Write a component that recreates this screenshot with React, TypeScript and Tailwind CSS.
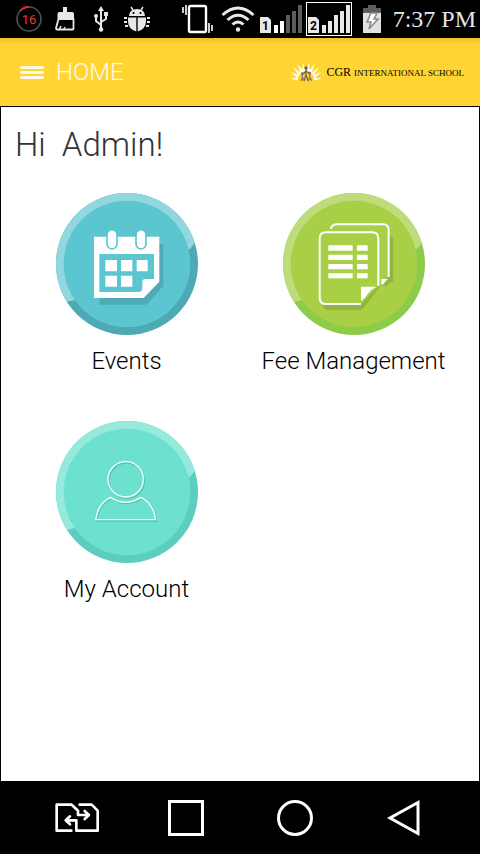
import React from 'react';

interface TileArtProps {
  base: string;
  light: string;
  dark: string;
  children: React.ReactNode;
}

// Round badge with a two-tone bevel, the glyph goes in the middle
const TileArt: React.FC<TileArtProps> = ({ base, light, dark, children }) => (
  <svg viewBox="0 0 426 426" className="size-[142px]" aria-hidden="true">
    <circle cx="213" cy="213" r="213" fill={dark} />
    <path d="M416.1 149 A213 213 0 1 0 32.4 325.9 L54 322 L402 168 Z" fill={light} />
    <circle cx="213" cy="213" r="190" fill={base} />
    {children}
  </svg>
);

const EventsArt = () => (
  <TileArt base="#5bc5d0" light="#92d7e0" dark="#4da9b4">
    <g transform="translate(-30 -24)">
      <path d="M160 330 V359 H297 Q303 359 308 353 L348 307 Q352 303 352 297 V178 H330 Z" fill="#4fabb6" />
      <path d="M144 155 H340 V290 L293 339 H144 Z" fill="#fff" />
      <path d="M160 207 H324 V282 H298 Q289 282 289 291 V309 Q289 321 277 321 H160 Z" fill="#5bc5d0" />
      <path d="M178 225h35v34h-35z M225 225h34v34h-34z M272 225h33v34h-33z M178 272h35v33h-35z M225 272h34v33h-34z" fill="#fff" />
      <rect x="183" y="134" width="30" height="58" rx="15" fill="#fff" stroke="#5bc5d0" strokeWidth="5" />
      <rect x="270" y="134" width="30" height="58" rx="15" fill="#fff" stroke="#5bc5d0" strokeWidth="5" />
    </g>
  </TileArt>
);

const FeeArt = () => (
  <TileArt base="#a9cf46" light="#bfdc7b" dark="#8dcb4b">
    <g transform="translate(-69 -26)">
      <path d="M386 150 L400 160 V290 L378 304 L362 304 L311 370 Q304 378 294 378 H204 Q190 376 186 358 H303 L358 303 L386 275 Z" fill="#90b63e" />
      <path d="M179 163 Q179 144 198 144 H336 Q355 144 355 163 V303 L303 359 H197 Q179 359 179 341 Z" fill="#a9cf46" />
      <g fill="none" stroke="#fff" strokeWidth="6">
        <path d="M212 133 Q217 120 231 120 H369 Q386 120 386 137 V278" />
        <path d="M303 359 H198 Q179 359 179 340 V163 Q179 144 198 144 H336 Q355 144 355 163 V305" />
      </g>
      <path d="M303 307 H349 Q333 315 326 325 Q316 341 303 351 Z" fill="#fff" />
      <path d="M364 284 H384 Q376 290 373 296 Q368 302 364 303 Z" fill="#fff" />
      <path
        d="M205 183h73v16h-73z M205 211h73v16h-73z M205 239h73v16h-73z M205 267h73v15h-73z M291 183h32v16h-32z M291 211h32v16h-32z M291 239h32v16h-32z M291 267h32v15h-32z"
        fill="#fff"
      />
    </g>
  </TileArt>
);

const AccountArt = () => (
  <TileArt base="#6ce1cf" light="#95eadd" dark="#5dcdc0">
    <g transform="translate(-30 -33)" fill="none" strokeWidth="4">
      <g stroke="#58c4b4" transform="translate(3 4)">
        <circle cx="239" cy="208" r="53" />
        <path d="M149 329 Q156 280 193 262 Q239 292 284 262 Q322 280 329 329 Z" />
      </g>
      <g stroke="#effffc">
        <circle cx="239" cy="208" r="53" />
        <path d="M149 329 Q156 280 193 262 Q239 292 284 262 Q322 280 329 329 Z" />
      </g>
    </g>
  </TileArt>
);

const SchoolMark = () => (
  <svg viewBox="0 0 96 60" className="w-8 h-5" aria-hidden="true">
    <g fill="#fffdf0">
      <path d="M1 50 L24 46 L24 55 Z M1 30 L26 39 L23 48 Z M9 14 L32 34 L26 42 Z M22 5 L40 28 L32 35 Z M39 0 L46 27 L37 30 Z" />
      <path d="M95 50 L72 46 L72 55 Z M95 30 L70 39 L73 48 Z M87 14 L64 34 L70 42 Z M74 5 L56 28 L64 35 Z M57 0 L50 27 L59 30 Z" />
    </g>
    <circle cx="48" cy="18" r="5" fill="#6b6257" />
    <g stroke="#75695f" strokeWidth="4" fill="none">
      <path d="M48 21 V40 M48 27 L40 36 M48 27 L57 34 M48 38 L42 57 M48 38 L54 57" />
      <path d="M37 38 V47 L33 57 M37 47 L42 56" stroke="#8a6d78" />
      <path d="M59 36 V46 L55 57 M59 46 L65 56" stroke="#8d7a52" />
    </g>
    <circle cx="37" cy="35" r="4" fill="#6b6a86" />
    <circle cx="59" cy="33" r="4" fill="#96614c" />
  </svg>
);

const StatusBar = () => (
  <div className="flex h-[38px] items-center bg-black pl-[11px] pr-1">
    <div className="flex items-center">
      <span className="flex w-9 justify-center">
        <svg viewBox="0 0 26 26" className="size-[26px]">
          <circle cx="13" cy="13" r="12" fill="none" stroke="#4b5356" strokeWidth="1.6" />
          <path d="M4 5 A12 12 0 0 1 13 1" fill="none" stroke="#e02840" strokeWidth="1.8" />
          <text x="13" y="17.5" textAnchor="middle" fontSize="13" fill="#e83434" className="font-['Roboto',sans-serif]">16</text>
        </svg>
      </span>
      <span className="flex w-9 justify-center">
        <svg viewBox="0 0 20 24" className="w-5 h-6">
          <path d="M8 0h4v5h5q2 0 2 2v4.500H2.500V7q0-2 2-2H8z" fill="#e8e8e8" />
          <path d="M3.500 12h15v9.500q0 1-1 1H2q-1 0-1-1.500z" fill="#000" stroke="#e8e8e8" strokeWidth="1.800" strokeLinejoin="round" />
          <path d="M4.500 22l1.500-3 M9 22l1-2" stroke="#e8e8e8" strokeWidth="1.500" />
        </svg>
      </span>
      <span className="flex w-9 justify-center">
        <svg viewBox="0 0 14 26" className="w-3.5 h-[26px]">
          <path d="M7 3v21 M7 19l-5-4v-5 M7 16l5-3V8" fill="none" stroke="#e8e8e8" strokeWidth="2" />
          <path d="M7 0l3 5H4z M10 6h4v4h-4z" fill="#e8e8e8" />
          <circle cx="2" cy="10" r="2" fill="#e8e8e8" />
          <circle cx="7" cy="23.500" r="2.300" fill="#e8e8e8" />
        </svg>
      </span>
      <span className="flex w-9 justify-center">
        <svg viewBox="0 0 26 26" className="size-[26px]">
          <path d="M7 1l2 3 M19 1l-2 3" stroke="#e8e8e8" strokeWidth="1.500" />
          <path d="M5 10 Q5.500 3 13 3 Q20.500 3 21 10z M4 11.500h8.300V25.500Q4 23 4 15z M13.700 11.500H22V15q0 8-8.300 10.500z" fill="#e8e8e8" />
          <circle cx="9.500" cy="7" r="1.100" fill="#000" />
          <circle cx="16.500" cy="7" r="1.100" fill="#000" />
          <path d="M0 12h3 M0 16h3 M1 20h3 M23 12h3 M23 16h3 M22 20h3" stroke="#e8e8e8" strokeWidth="2" />
        </svg>
      </span>
    </div>

    <div className="ml-auto flex items-center">
      <svg viewBox="0 0 32 30" className="mr-2 w-8 h-[30px]">
        <rect x="8" y="2" width="17" height="26" rx="1.500" fill="none" stroke="#fff" strokeWidth="2.400" />
        <path d="M2 3v6 M5 1v10 M28 19v10 M31 21v6" stroke="#fff" strokeWidth="1.600" />
      </svg>
      <svg viewBox="0 0 34 26" className="mr-1 w-[34px] h-[26px]">
        <g fill="none" stroke="#e8e8e8" strokeWidth="3">
          <path d="M1.500 9 Q17 -5 32.500 9" />
          <path d="M6.500 14 Q17 4.500 27.500 14" />
          <path d="M11.500 18.500 Q17 13.500 22.500 18.500" />
        </g>
        <circle cx="17" cy="23.500" r="2.200" fill="#e8e8e8" />
      </svg>
      <svg viewBox="0 0 44 34" className="mr-0.5 w-11 h-[34px]">
        <path d="M1 15h8l3 3v13H1z" fill="#e8e8e8" />
        <text x="6.500" y="28" textAnchor="middle" fontSize="12" fontWeight="700" fill="#000" className="font-['Roboto',sans-serif]">1</text>
        <path d="M15 23h4v8h-4z M21 19h4v12h-4z" fill="#fff" />
        <path d="M27 13h4v18h-4z M33 9h4v22h-4z M39 3h4v28h-4z" fill="#5c5c5c" />
      </svg>
      <svg viewBox="0 0 48 36" className="mr-2.5 w-12 h-9">
        <rect x="1.500" y="1.500" width="45" height="33" fill="none" stroke="#fff" />
        <path d="M3 16h8l3 3v13H3z" fill="#e8e8e8" />
        <text x="8.500" y="29" textAnchor="middle" fontSize="12" fontWeight="700" fill="#000" className="font-['Roboto',sans-serif]">2</text>
        <path d="M17 24h4v8h-4z M23 20h4v12h-4z M29 14h4v18h-4z M35 10h4v22h-4z M41 4h4v28h-4z" fill="#e8e8e8" />
      </svg>
      <svg viewBox="0 0 18 30" className="mr-3 w-[18px] h-[30px]">
        <path d="M5 1h8v3h5v8H0V4h5z" fill="#5c5c5c" />
        <path d="M0 9h18v20H0z" fill="#e2e2e2" />
        <path d="M8 9h6l-3 6h4L6 25l2-7H4z" fill="#fff" stroke="#8c8c8c" strokeWidth="1.600" />
      </svg>
      <span className="font-['Liberation_Serif',serif] text-2xl text-gray-200">7:37 PM</span>
    </div>
  </div>
);

const tiles = [
  { name: 'Events', art: <EventsArt /> },
  { name: 'Fee Management', art: <FeeArt /> },
  { name: 'My Account', art: <AccountArt /> },
];

const navButtons = [
  {
    name: 'Switch SIM',
    icon: (
      <svg viewBox="163 101 132 87" className="w-11 h-[29px]" fill="none" stroke="#fff" strokeWidth="8" strokeLinejoin="round" strokeLinecap="round">
        <path d="M212 184 H168 V106 H213 L232 124 V137 H262 M252 125 L265 137 L252 149" />
        <path d="M237 106 H273 L291 124 V184 H227 V153 H197 M208 141 L195 153 L208 165" />
      </svg>
    ),
  },
  {
    name: 'Recent apps',
    icon: (
      <svg viewBox="0 0 38 38" className="size-[38px]" fill="none" stroke="#fff" strokeWidth="3">
        <rect x="2.500" y="2.500" width="33" height="33" />
      </svg>
    ),
  },
  {
    name: 'Home screen',
    icon: (
      <svg viewBox="0 0 38 38" className="size-[38px]" fill="none" stroke="#fff" strokeWidth="3">
        <circle cx="19" cy="19" r="16.500" />
      </svg>
    ),
  },
  {
    name: 'Back',
    icon: (
      <svg viewBox="0 0 38 38" className="size-[38px]" fill="none" stroke="#fff" strokeWidth="3">
        <path d="M33 3.500 V34.500 L5 19 Z" />
      </svg>
    ),
  },
];

const App: React.FC = () => {
  return (
    <div className="flex min-h-screen flex-col bg-black font-['Roboto',sans-serif]">
      <StatusBar />

      {/* App bar */}
      <header className="flex h-[68px] items-center bg-[#ffd433] bg-linear-to-b from-[#f0c02c] to-[#ffd433] to-10% pl-5 pr-4">
        <button aria-label="Menu" className="mr-3 flex w-6 flex-col gap-0.5">
          <span className="h-[3px] rounded-full bg-[#fffbe8]" />
          <span className="h-[3px] rounded-full bg-[#fffbe8]" />
          <span className="h-[3px] rounded-full bg-[#fffbe8]" />
        </button>
        <h1 className="text-2xl font-light text-[#fffbe8]">HOME</h1>
        <div className="ml-auto flex items-center gap-1">
          <SchoolMark />
          <span className="font-['Liberation_Serif',serif] text-xs text-black">
            CGR <span className="text-[9px]">INTERNATIONAL SCHOOL</span>
          </span>
        </div>
      </header>

      {/* Dashboard */}
      <main className="flex-1 border-x border-t border-black bg-white pt-4">
        <h2 className="whitespace-pre px-3.5 text-[33px] leading-[44px] font-light text-[#333]">Hi  Admin!</h2>
        <div className="mt-[26px] grid grid-cols-2 gap-y-[42px] px-3">
          {tiles.map((tile) => (
            <button key={tile.name} className="flex flex-col items-center gap-2">
              {tile.art}
              <span className="text-2xl leading-9 font-light whitespace-nowrap text-black">{tile.name}</span>
            </button>
          ))}
        </div>
      </main>

      {/* System navigation */}
      <nav className="grid h-[73px] grid-cols-4 px-[22px]">
        {navButtons.map((button) => (
          <button key={button.name} aria-label={button.name} className="flex items-center justify-center">
            {button.icon}
          </button>
        ))}
      </nav>
    </div>
  );
};

export default App;
